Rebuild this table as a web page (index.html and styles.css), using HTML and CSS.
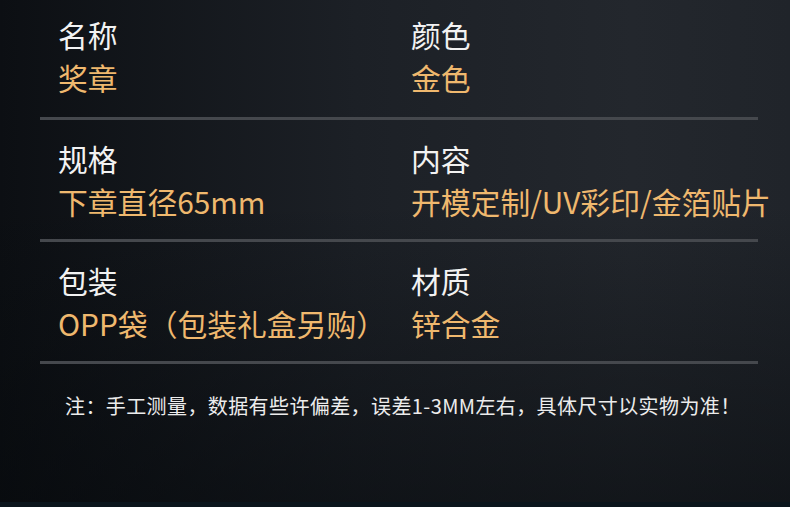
FILE: index.html
```html
<!DOCTYPE html>
<html lang="zh">
<head>
<meta charset="utf-8">
<link rel="stylesheet" href="styles.css">
</head>
<body>
<div class="page">
  <div class="specs">
    <div class="row first">
      <div class="cell"><div class="label">名称</div><div class="value">奖章</div></div>
      <div class="cell"><div class="label">颜色</div><div class="value">金色</div></div>
    </div>
    <div class="row">
      <div class="cell"><div class="label">规格</div><div class="value">下章直径65mm</div></div>
      <div class="cell"><div class="label">内容</div><div class="value">开模定制/UV彩印/金箔贴片</div></div>
    </div>
    <div class="row">
      <div class="cell"><div class="label">包装</div><div class="value">OPP袋（包装礼盒另购）</div></div>
      <div class="cell"><div class="label">材质</div><div class="value">锌合金</div></div>
    </div>
  </div>
  <p class="note">注：手工测量，数据有些许偏差，误差1-3MM左右，具体尺寸以实物为准！</p>
  <div class="strip"></div>
</div>
</body>
</html>
```
FILE: styles.css
```css
html, body {
  margin: 0;
  padding: 0;
}
body {
  width: 790px;
  height: 507px;
  overflow: hidden;
  font-family: "Noto Sans CJK SC", "Noto Sans", sans-serif;
}
.page {
  width: 790px;
  height: 507px;
  display: flex;
  flex-direction: column;
  background:
    linear-gradient(to bottom, rgba(5,8,11,0) 0%, rgba(5,8,11,0) 40%, rgba(5,8,11,0.55) 100%),
    linear-gradient(to right, #0c0f13 0%, #1c2026 45%, #23272d 80%, #20242a 100%);
}
.specs {
  padding: 0 32px 0 40px;
}
.row {
  display: grid;
  grid-template-columns: 353px 1fr;
  padding: 17px 0 16px 18px;
  border-bottom: 3px solid #45484d;
}
.row.first {
  padding-top: 13px;
  padding-bottom: 18px;
}
.label, .value {
  font-size: 29.8px;
  line-height: 43px;
  white-space: nowrap;
}
.label {
  color: #f2f2f2;
}
.value {
  color: #efb86e;
}
.note {
  margin: 27px 0 0 65px;
  font-size: 20px;
  line-height: 30px;
  letter-spacing: 0.4px;
  color: #ececec;
  flex: 1;
}
.strip {
  height: 5px;
  background: #0b151c;
}
```
